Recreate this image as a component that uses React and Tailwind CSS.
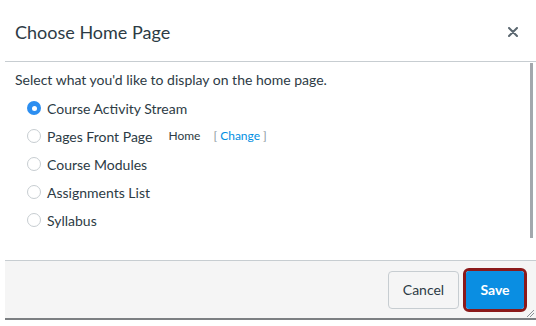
import React from "react";

const font = { fontFamily: "Lato, 'Liberation Sans', sans-serif" };

function Radio({ checked }) {
  return checked ? (
    <span className="flex h-[14px] w-[14px] items-center justify-center rounded-full bg-[#2c8ef0]">
      <span className="h-[5px] w-[5px] rounded-full bg-white" />
    </span>
  ) : (
    <span className="h-[14px] w-[14px] rounded-full border border-[#c7cdd1] bg-white" />
  );
}

function Row({ checked, label, children }) {
  return (
    <div className="flex h-[28px] items-center">
      <div className="ml-[21px] flex w-[16px] justify-center">
        <Radio checked={checked} />
      </div>
      <span className="ml-[5px] text-[14px] text-[#2d3b45]">{label}</span>
      {children}
    </div>
  );
}

export default function App() {
  return (
    <div className="h-[326px] w-[536px] overflow-hidden bg-white" style={font}>
      <div className="ml-[5px] flex flex-col">
        <div className="flex h-[62px] items-center justify-between border-b border-[#c7cdd1] pt-[3px]">
          <span className="ml-[10px] text-[18px] text-[#2d3b45]">Choose Home Page</span>
          <svg className="mr-[18px]" width="10" height="10" viewBox="0 0 10 10">
            <path d="M1 1 L9 9 M9 1 L1 9" stroke="#5b6770" strokeWidth="2" strokeLinecap="round" />
          </svg>
        </div>
        <div className="relative h-[198px]">
          <div className="pt-[8px]">
            <div className="ml-[10px] h-[20px] text-[14px] leading-[20px] text-[#2d3b45]">
              Select what you'd like to display on the home page.
            </div>
            <div className="mt-[4px] flex flex-col">
              <Row checked label="Course Activity Stream" />
              <Row label="Pages Front Page">
                <span className="ml-[16px] text-[12px] text-[#2d3b45]">Home</span>
                <span className="ml-[13px] text-[12px] text-[#8b969e]">
                  [ <span className="text-[#008ee2]">Change</span> ]
                </span>
              </Row>
              <Row label="Course Modules" />
              <Row label="Assignments List" />
              <Row label="Syllabus" />
            </div>
          </div>
          <div className="absolute right-[3px] top-[1px] h-[175px] w-[3px] bg-[#a3a8ad]" />
        </div>
        <div className="relative flex h-[58px] items-center justify-end border-t border-[#c7cdd1] bg-[#f5f5f5] pr-[9px]">
          <button className="h-[38px] w-[71px] rounded-[4px] border border-[#c7cdd1] bg-[#f5f5f5] text-[14px] text-[#2d3b45]">
            Cancel
          </button>
          <div className="ml-[4px] rounded-[6px] border-[3px] border-[#8b1a1a] p-0">
            <button className="h-[38px] w-[58px] rounded-[3px] bg-[#0a8ee2] text-[14px] font-bold text-white">
              Save
            </button>
          </div>
          <svg className="absolute bottom-[1px] right-[2px]" width="8" height="8" viewBox="0 0 8 8">
            <path d="M1 8 L8 1 M4 8 L8 4" stroke="#8a8f94" strokeWidth="1" />
          </svg>
        </div>
        <div className="h-[2px] bg-[#7c7f82]" />
      </div>
    </div>
  );
}
